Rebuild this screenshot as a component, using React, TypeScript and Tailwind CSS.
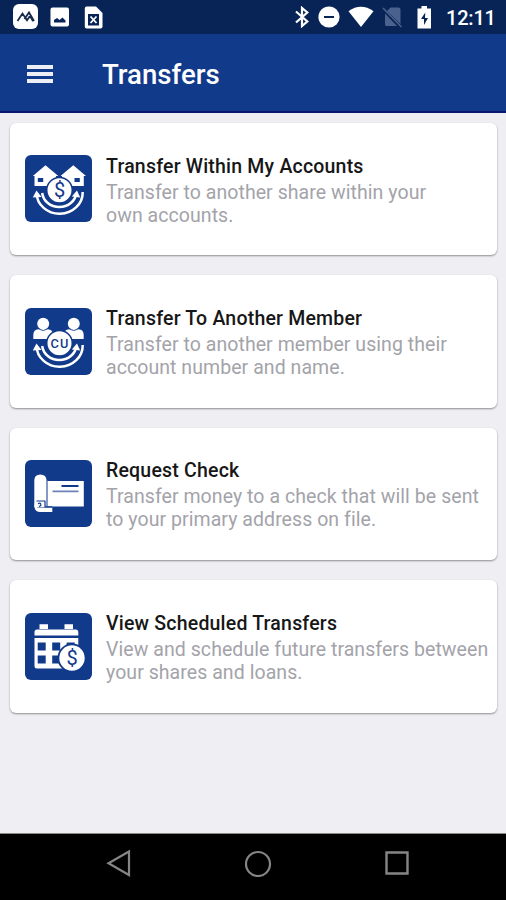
import type { ReactNode } from 'react';

const BLUE = '#123a8b';

function Arcs() {
  return (
    <g fill="none" stroke="#fff">
      <path d="M11.5 38a23 21.2 0 0 0 46.2 -1" strokeWidth="2.5" />
      <path d="M17.2 38a17.2 15.8 0 0 0 34.2 0" strokeWidth="2.5" />
      <path d="M11.5 35.5 16.5 42 7.8 42.5z" fill="#fff" stroke="none" />
      <path d="M52 35.5 55.2 42.5 46.8 41.5z" fill="#fff" stroke="none" />
    </g>
  );
}

function Dollar({ x, y }: { x: number; y: number }) {
  return (
    <text x={x} y={y} textAnchor="middle" fontSize="20" fontFamily="Roboto, sans-serif" fill={BLUE}>
      $
    </text>
  );
}

function HousesIcon() {
  return (
    <>
      <path d="M20.5 10.3 33.3 21H31V31H9.5V21H7.8z" fill="#fff" />
      <path d="M48.3 10.3 61 21H58.8V31H37V21H35.5z" fill="#fff" />
      <path d="M12.8 23H18.2V27H12.8zM49.5 23H54.8V27H49.5z" fill={BLUE} />
      <Arcs />
      <circle cx="34.5" cy="35.3" r="12.8" fill="#fff" stroke={BLUE} strokeWidth="1.6" />
      <Dollar x={34.5} y={42.3} />
    </>
  );
}

function MembersIcon() {
  return (
    <>
      <g fill="#fff">
        <circle cx="18.2" cy="15.8" r="6" />
        <circle cx="48.8" cy="15.8" r="6" />
        <path d="M8.3 31V27Q8.3 21.5 13.5 21.2H22.8Q28 21.5 28 27V31z" />
        <path d="M39 31V27Q39 21.5 44.2 21.2H53.5Q58.7 21.5 58.7 27V31z" />
      </g>
      <path d="M14.2 21.2Q18.2 24 22.2 21.2M44.8 21.2Q48.8 24 52.8 21.2" fill="none" stroke={BLUE} strokeWidth=".8" />
      <Arcs />
      <circle cx="34.5" cy="35.3" r="12.8" fill="#fff" stroke={BLUE} strokeWidth="1.6" />
      <text x="34.9" y="39.8" textAnchor="middle" fontSize="12.8" fontWeight="500" letterSpacing="1" fontFamily="Roboto, sans-serif" fill={BLUE}>
        CU
      </text>
    </>
  );
}

function CheckIcon() {
  return (
    <>
      <path d="M22.5 21H58.8V46.5H22.5z" fill="#fff" />
      <path d="M36.5 26H53.5" stroke={BLUE} strokeWidth="2" />
      <path d="M27.5 31.3H53.5" stroke="#6c82b5" strokeWidth="1.7" />
      <path d="M9.3 43V20.5Q9.3 14.5 15.3 14.5 21.5 14.5 21.5 20.5V47H9.3z" fill="#fff" />
      <path d="M21.8 20V47" stroke="#8294c1" strokeWidth="1" />
      <path d="M9.3 42.5Q9.3 47.5 14 47.5H27.3V52H15Q9.3 52 9.3 45z" fill="#fff" />
      <path d="M11.5 41H20.5M13 43.8Q16.2 42 15.8 45.6L14 46.6M20 41.5V46.8H27.3" stroke={BLUE} strokeWidth="1.2" fill="none" />
    </>
  );
}

function CalendarIcon() {
  return (
    <>
      <path d="M14.5 11.3H23V16H14.5zM39.5 11.3H48V16H39.5z" fill="#fff" />
      <path d="M9.5 22.5V19Q9.5 16.5 12 16.5H51Q53.3 16.5 53.3 19V22.5z" fill="#fff" />
      <path d="M9.5 25H53.3V55.5H12Q9.5 55.5 9.5 53z" fill="#fff" />
      <path d="M12.7 29.5H20.7V37.5H12.7zM27.2 29.5H35.2V37.5H27.2zM41.7 29.5H49.7V37.5H41.7zM12.7 42.5H20.7V50.5H12.7zM27.2 42.5H35.2V50.5H27.2z" fill={BLUE} />
      <circle cx="47" cy="45" r="13.6" fill="#fff" stroke={BLUE} strokeWidth="1.8" />
      <Dollar x={47} y={52} />
    </>
  );
}

interface CardProps {
  title: string;
  lines: [string, string];
  icon: ReactNode;
}

function Card({ title, lines, icon }: CardProps) {
  return (
    <article className="flex h-[132.4px] items-center rounded-[6px] bg-white pl-[15px] shadow-[0_1px_2px_rgba(0,0,0,0.4)]">
      <svg className="mb-[0.6px] size-[67px] shrink-0 rounded-[6px] bg-[#123a8b]" viewBox="0 0 67 67">
        {icon}
      </svg>
      <div className="ml-[14px] whitespace-nowrap pt-px">
        <h2 className="text-[19.5px] leading-[27px] font-medium tracking-[0.2px] text-[#171717]">{title}</h2>
        <p className="pt-px text-[19.5px] leading-[23px] tracking-[0.06px] text-[#a3a3aa]">
          {lines[0]}
          <br />
          {lines[1]}
        </p>
      </div>
    </article>
  );
}

const cards: CardProps[] = [
  { title: 'Transfer Within My Accounts', lines: ['Transfer to another share within your', 'own accounts.'], icon: <HousesIcon /> },
  { title: 'Transfer To Another Member', lines: ['Transfer to another member using their', 'account number and name.'], icon: <MembersIcon /> },
  { title: 'Request Check', lines: ['Transfer money to a check that will be sent', 'to your primary address on file.'], icon: <CheckIcon /> },
  { title: 'View Scheduled Transfers', lines: ['View and schedule future transfers between', 'your shares and loans.'], icon: <CalendarIcon /> },
];

function StatusBar() {
  return (
    <div className="flex h-[34px] items-center bg-[#082456] text-white">
      <svg className="ml-[13px] h-[26px] w-[26px]" viewBox="0 0 26 26">
        <rect width="25" height="25" rx="6" fill="#fff" />
        <path d="M4.5 17 9.5 9.5 14.5 17M11.5 15 16 8.5 21 17M13.5 17 17 12 20 17" fill="none" stroke="#172a4d" strokeWidth="1.8" />
      </svg>
      <svg className="ml-[11px] size-[20px]" viewBox="0 0 20 20">
        <rect x=".5" y=".5" width="18.5" height="19" rx="2" fill="#fff" />
        <path d="M4 15.5V13L7 11 9.5 13 12.5 10.5 15.5 13.5V15.5z" fill="#082456" />
      </svg>
      <svg className="ml-[14px] h-[23px] w-[19px]" viewBox="0 0 19 23">
        <path d="M2.5.5H12L18.5 7V20.5Q18.5 22.5 16.5 22.5H2.5Q.8 22.5.8 20.5V2.5Q.8.5 2.5.5z" fill="#fff" />
        <path d="M4 8H15V19.5H4z" fill="#082456" />
        <path d="M6.5 10.5 12.5 17M12.5 10.5 6.5 17" stroke="#fff" strokeWidth="1.8" />
      </svg>
      <svg className="ml-[192px] h-[22px] w-[14px]" viewBox="0 0 14 22">
        <path d="M1 5.5 12.3 15.5 7 20V2L12.3 6.5 1 16.5" fill="none" stroke="#fff" strokeWidth="2.2" />
      </svg>
      <svg className="ml-[9px] size-[22px]" viewBox="0 0 22 22">
        <circle cx="11" cy="11" r="10.6" fill="#fff" />
        <path d="M6 11H16" stroke="#082456" strokeWidth="2" />
      </svg>
      <svg className="ml-[8px] h-[22px] w-[26px]" viewBox="0 0 26 22">
        <path d="M.5 5.2Q13-3.5 25.5 5.2L13 21z" fill="#fff" />
      </svg>
      <svg className="ml-[8px] size-[22px]" viewBox="0 0 22 22">
        <path d="M3 7.5V18.5Q3 20 4.5 20H15zM5 5 8.5 1.5H16.5Q18.5 1.5 18.5 3.5V18z" fill="#4a618d" />
        <path d="M1 2 19.5 21" stroke="#4a618d" strokeWidth="1.6" />
      </svg>
      <svg className="ml-[13px] h-[23px] w-[15px]" viewBox="0 0 15 23">
        <path d="M4.5 0H10V2.5H14V22.5H.5V2.5H4.5z" fill="#fff" />
        <path d="M8.3 6.5 4 13H7V19L11 12H8z" fill="#082456" />
      </svg>
      <span className="ml-[14px] pt-[2px] text-[20px] leading-none font-medium tracking-[-0.2px]">12:11</span>
    </div>
  );
}

export default function App() {
  return (
    <div className="flex h-[900px] w-[506px] flex-col overflow-hidden bg-[#eeeef3] font-['Roboto',sans-serif]">
      <StatusBar />
      <header className="flex h-[79px] items-center border-b-2 border-[#08186f] bg-[#123a8b] pl-[27px] text-white">
        <div className="flex w-[26px] flex-col gap-[3px] pt-[2px]">
          <i className="h-[4px] bg-[#eeeef6]" />
          <i className="h-[4px] bg-[#eeeef6]" />
          <i className="h-[4px] bg-[#eeeef6]" />
        </div>
        <h1 className="ml-[49px] pt-[4px] text-[27.6px] leading-none font-medium">Transfers</h1>
      </header>
      <main className="flex flex-1 flex-col gap-[20px] pt-[10px] pr-[9px] pl-[10px]">
        {cards.map((card) => (
          <Card key={card.title} {...card} />
        ))}
      </main>
      <nav className="flex h-[67px] border-t border-[#888] bg-black">
        <svg className="mt-[15px] ml-[106px] size-[28px]" viewBox="0 0 28 28" fill="none" stroke="#858585" strokeWidth="2.2">
          <path d="M23 2.5V26L2.5 14.2z" />
        </svg>
        <svg className="mt-[15px] ml-[110px] size-[28px]" viewBox="0 0 28 28" fill="none" stroke="#858585" strokeWidth="2.2">
          <circle cx="14" cy="15" r="12" />
        </svg>
        <svg className="mt-[15px] ml-[111px] size-[28px]" viewBox="0 0 28 28" fill="none" stroke="#858585" strokeWidth="2.4">
          <path d="M3.5 3.5H24.5V24.5H3.5z" />
        </svg>
      </nav>
    </div>
  );
}
